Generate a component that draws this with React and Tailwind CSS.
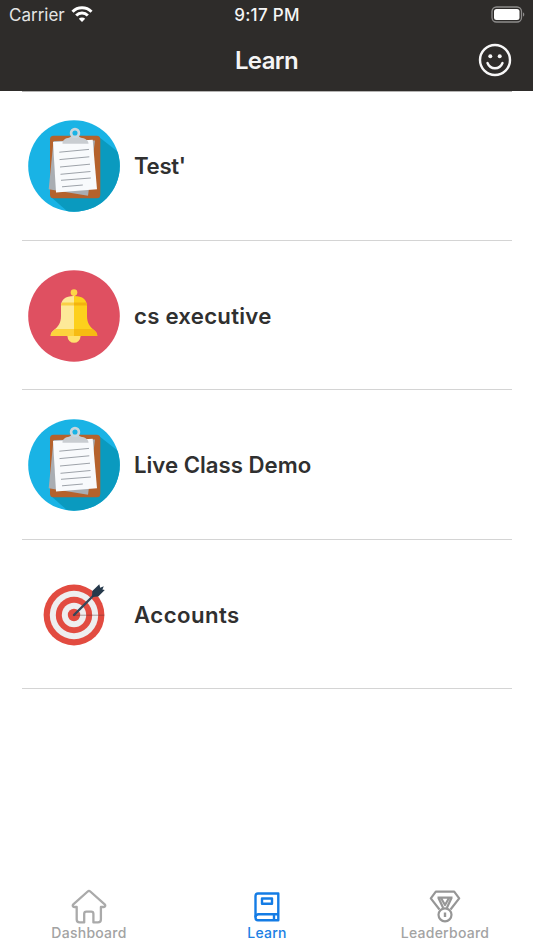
import React from 'react';

function ClipboardIcon({ id }) {
    return (
        <svg viewBox="0 0 92 92" className="size-[92px] shrink-0">
            <clipPath id={id}>
                <circle cx="46" cy="46" r="45.8" />
            </clipPath>
            <circle cx="46" cy="46" r="45.8" fill="#19b3e5" />
            <path d="M71 17l28 22v60H48L23 77z" fill="#0a9abf" clipPath={`url(#${id})`} />
            <rect x="22" y="15.8" width="50.3" height="62.5" rx="3.5" fill="#b5622c" />
            <path d="M25.5 21L20.7 69.3 60 75.8 67 20.5z" fill="#a9adb2" />
            <path d="M25 22l39.7-2.3L69 69.2l-41 3.2z" fill="#f8fafc" />
            <g stroke="#858c93" strokeWidth="0.8">
                <path d="M31.3 32.2L61 29.4" />
                <path d="M31.5 39.6L61.3 36.8" />
                <path d="M32 47L62 44.2" />
                <path d="M32.5 54.3L62.5 51.5" />
                <path d="M33 60.3L62.8 58" />
                <path d="M34 66.8L54.8 65" />
            </g>
            <path d="M34.5 23.8c0-4 3-5.5 6.5-6 1.5-.2 1.8-2 3-2h6c1.2 0 1.5 1.8 3 2 3.5.5 7.5 2 7.5 6z" fill="#c9cdd1" />
            <circle cx="47" cy="13" r="3.9" fill="#19b3e5" stroke="#c9d5dc" strokeWidth="2.7" />
        </svg>
    );
}

function BellIcon() {
    return (
        <svg viewBox="0 0 92 92" className="size-[92px] shrink-0">
            <circle cx="46" cy="46" r="45.8" fill="#df5061" />
            <circle cx="46" cy="66.3" r="6.5" fill="#ffe16e" />
            <circle cx="46" cy="22.5" r="3.3" fill="#fcd648" />
            <path d="M44.8 24h2.4v4h-2.4z" fill="#fcd648" />
            <path d="M46 26C37 26 33 30 33 36v10c0 7-3 11-7 14-2 1.5-3.3 3-3.3 6H46z" fill="#fde998" />
            <path d="M46 26c9 0 13 4 13 10v10c0 7 3 11 7 14 2 1.5 3.3 3 3.3 6H46z" fill="#fdd01c" />
            <path d="M34.2 32.5H46v3H33c0-1.2.5-2.2 1.2-3z" fill="#f9cf45" />
            <path d="M46 32.5h11.8c.7.8 1.2 1.8 1.2 3H46z" fill="#f3b40e" />
            <path d="M27.5 59H46v7H22.700c0-3.5 2.3-5 4.8-7z" fill="#fdd23d" />
            <path d="M46 59h18.5c2.5 2 4.8 3.5 4.8 7H46z" fill="#f6bb12" />
        </svg>
    );
}

function TargetIcon() {
    return (
        <svg viewBox="0 0 92 92" className="size-[92px] shrink-0">
            <circle cx="46" cy="46" r="30.4" fill="#e24b40" />
            <circle cx="46" cy="46" r="24.2" fill="#eeeeef" />
            <circle cx="46" cy="46" r="18.2" fill="#e24b40" />
            <circle cx="46" cy="46" r="12.2" fill="#eeeeef" />
            <circle cx="46" cy="46" r="6.2" fill="#e24b40" />
            <path d="M46 46.2h30.3" stroke="#5b3434" strokeOpacity="0.45" strokeWidth="1" />
            <path d="M46 46l23-23" stroke="#34475a" strokeWidth="2.4" strokeLinecap="round" />
            <path d="M64 28l.3-6 7-6.8.9 3.6 3.6-1.6-1.4 3.4 2.400.4-6.5 6.6z" fill="#26394b" />
        </svg>
    );
}

function HomeIcon() {
    return (
        <svg viewBox="0 0 36 36" className="h-9 w-9" fill="none" stroke="#aaaaaa" strokeWidth="2.3" strokeLinejoin="round">
            <path d="M16.7 2.5L2.3 15.4c-1 1-.5 2.6 1 2.6h2.4v12.5c0 1.9 1 2.9 2.9 2.9h4.6v-8.6c0-1.4.8-2.2 2.2-2.2h4.8c1.4 0 2.2.8 2.2 2.2v8.6H27c1.9 0 2.9-1 2.9-2.9V18h2.8c1.5 0 2-1.6 1-2.6L19.3 2.5c-.8-.7-1.8-.7-2.6 0z" />
        </svg>
    );
}

function BookIcon() {
    return (
        <svg viewBox="0 0 36 36" className="h-9 w-9" fill="none" stroke="#147ce5" strokeWidth="2.4" strokeLinejoin="round">
            <path d="M9 4.5h20.300v26.8H9a2.500 2.500 0 0 1-2.500-2.500V7a2.500 2.500 0 0 1 2.500-2.500z" />
            <path d="M6.500 28.200a3 3 0 0 1 3-3h19.800M25 25.2v6" />
            <path d="M13 9.500h10v5.300H13z" />
        </svg>
    );
}

function MedalIcon() {
    return (
        <svg viewBox="0 0 36 36" className="h-9 w-9" fill="none" stroke="#969696" strokeWidth="2.2" strokeLinejoin="round">
            <path d="M12.5 20.5L3.8 9.3l5-6.6h18.4l5 6.6-8.7 11.2" />
            <path d="M10.5 8.7h15M11.5 9l4.7 10M24.5 9l-4.7 10M14 9l4 7 4-7" />
            <circle cx="18" cy="25.8" r="6.5" />
            <path d="M18 23.5v4.5" strokeWidth="2.4" />
        </svg>
    );
}

const courses = [
    { title: "Test'", icon: <ClipboardIcon id="clip-test" />, tracking: 'tracking-[-0.3px]' },
    { title: 'cs executive', icon: <BellIcon />, tracking: 'tracking-[0.25px]' },
    { title: 'Live Class Demo', icon: <ClipboardIcon id="clip-live" />, tracking: 'tracking-[0px]' },
    { title: 'Accounts', icon: <TargetIcon />, tracking: 'tracking-[0.45px]' },
];

const tabs = [
    { label: 'Dashboard', icon: <HomeIcon />, color: 'text-[#a3a3a3]' },
    { label: 'Learn', icon: <BookIcon />, color: 'text-[#2080e4]' },
    { label: 'Leaderboard', icon: <MedalIcon />, color: 'text-[#a3a3a3]' },
];

export default function App() {
    return (
        <div className="flex h-[950px] w-[534px] flex-col overflow-hidden bg-white font-['Inter',sans-serif]">
            <header className="mr-px h-[91px] bg-[#2e2c2a] text-[#f5f5f5]">
                <div className="grid h-[30px] grid-cols-3 items-center pl-[9px] pr-[8px]">
                    <div className="flex items-center gap-[6px]">
                        <span className="text-[17px] leading-none text-[#e4e4e4]">Carrier</span>
                        <svg viewBox="0 0 22 16" className="-mt-[2px] h-4 w-[22px]" fill="none" stroke="#ffffff" strokeWidth="3">
                            <path d="M1.5 5.7a13.5 13.5 0 0 1 19 0" />
                            <path d="M5.2 9.5a8.2 8.2 0 0 1 11.6 0" />
                            <path d="M11 16l-3.2-3.3a4.6 4.6 0 0 1 6.4 0z" fill="#ffffff" stroke="none" />
                        </svg>
                    </div>
                    <span className="text-center text-[17px] font-medium leading-none tracking-[0.3px]">9:17 PM</span>
                    <svg viewBox="0 0 34 17" className="-mt-[2px] h-[17px] w-[34px] justify-self-end">
                        <rect x="1" y="1" width="29.5" height="15" rx="4.5" fill="none" stroke="#8d8c8b" strokeWidth="1.3" />
                        <rect x="3" y="3" width="25.5" height="11" rx="2.5" fill="#ffffff" />
                        <path d="M32 6.5c1.7.5 1.7 3.5 0 4z" fill="#8d8c8b" />
                    </svg>
                </div>
                <div className="flex h-[60px] items-center pr-[21px]">
                    <h1 className="flex-1 pl-[55px] pt-px text-center text-[24px] font-semibold leading-none tracking-[-0.6px]">Learn</h1>
                    <svg viewBox="0 0 34 34" className="size-[34px]" fill="none" stroke="#f7f7f7" strokeWidth="2.4" strokeLinecap="round">
                        <circle cx="17" cy="17" r="15" />
                        <path d="M9.5 20c2.8 7 12.2 7 15 0" />
                        <circle cx="12.3" cy="13.3" r="2" fill="#f7f7f7" stroke="none" />
                        <circle cx="21.7" cy="13.3" r="2" fill="#f7f7f7" stroke="none" />
                    </svg>
                </div>
            </header>

            <main className="flex-1 px-[22px]">
                <div className="-mb-px h-px bg-[#b4b3b2]" />
                {courses.map((course) => (
                    <div key={course.title} className="flex h-[149.6px] items-center gap-[14px] border-b border-[#d4d4d4] pl-[6px] pt-[2px]">
                        {course.icon}
                        <h2 className={`text-[22.2px] font-semibold leading-none text-[#303030] ${course.tracking}`}>{course.title}</h2>
                    </div>
                ))}
            </main>

            <nav className="grid h-[61px] grid-cols-3">
                {tabs.map((tab) => (
                    <div key={tab.label} className={`flex flex-col items-center ${tab.color}`}>
                        {tab.icon}
                        <span className="text-[14px] font-medium leading-[15px] tracking-[0.25px]">{tab.label}</span>
                    </div>
                ))}
            </nav>
        </div>
    );
}
